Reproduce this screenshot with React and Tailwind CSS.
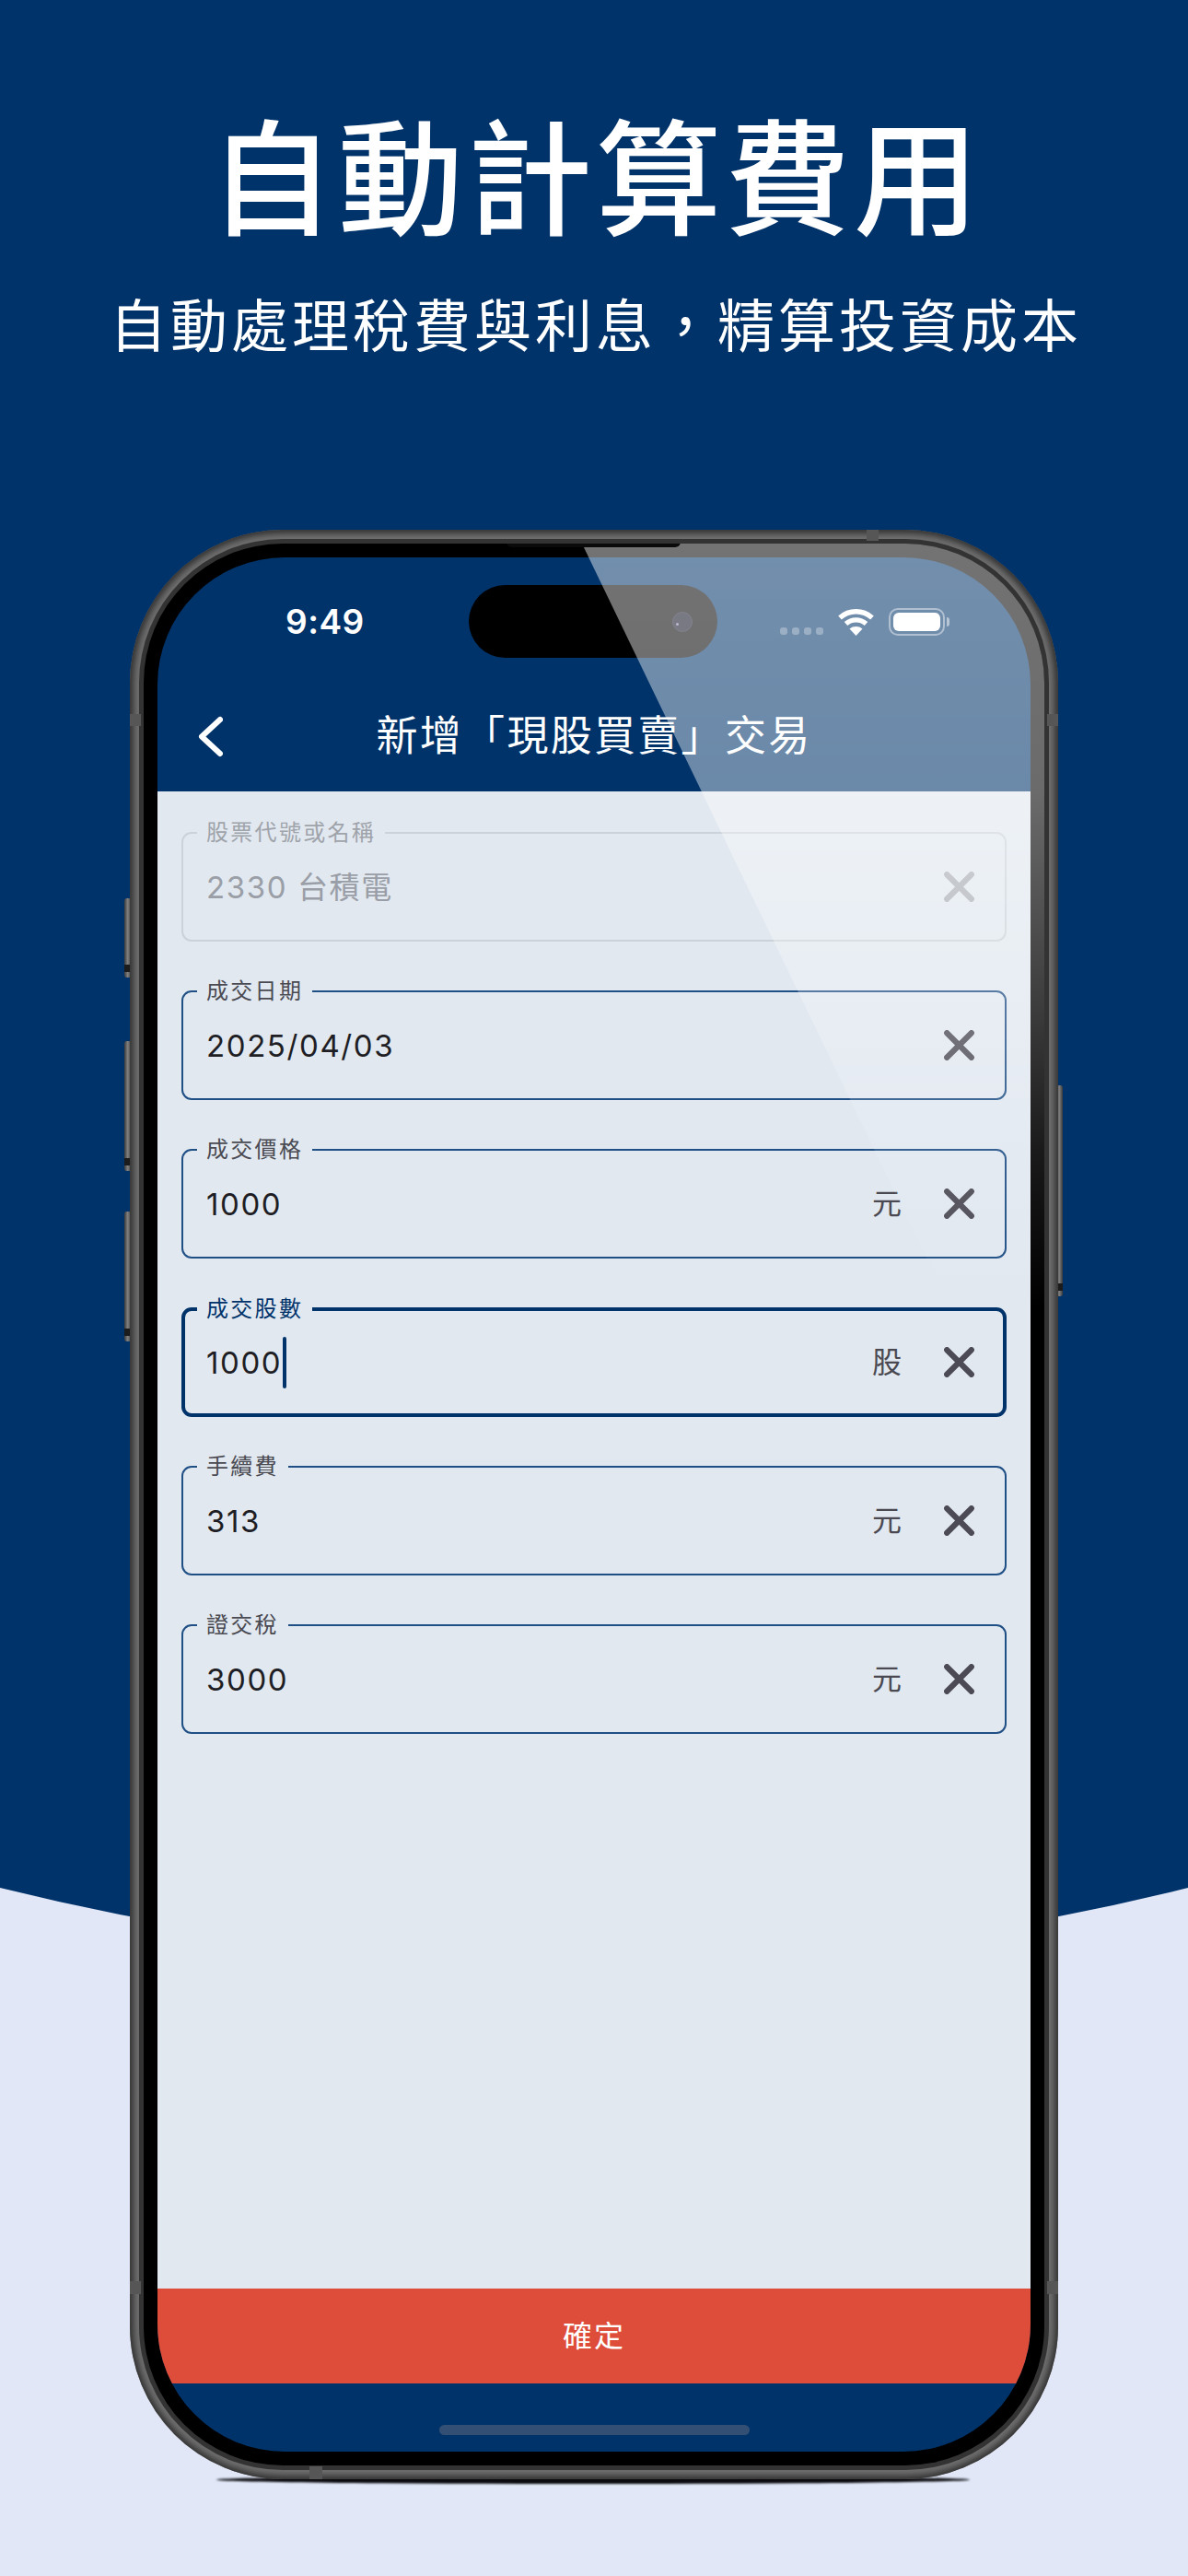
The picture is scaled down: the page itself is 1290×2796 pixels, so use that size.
const FONT = "[font-family:'Inter','Noto_Sans_CJK_TC',sans-serif]";

const fields = [
  { label: "股票代號或名稱", value: "2330 台積電", disabled: true },
  { label: "成交日期", value: "2025/04/03" },
  { label: "成交價格", value: "1000", unit: "元" },
  { label: "成交股數", value: "1000", unit: "股", focused: true },
  { label: "手續費", value: "313", unit: "元" },
  { label: "證交稅", value: "3000", unit: "元" },
];

function CloseIcon({ className }) {
  return (
    <svg viewBox="0 0 33 33" className={`w-[33px] h-[33px] shrink-0 ${className}`} fill="none" stroke="currentColor" strokeWidth="6.2" strokeLinecap="round">
      <path d="M3.2 3.2L29.8 29.8M29.8 3.2L3.2 29.8" />
    </svg>
  );
}

function Field({ label, value, unit, disabled, focused }) {
  const box = focused
    ? "border-4 border-[#00336a] pl-[23px] pr-[31px]"
    : disabled
      ? "border-2 border-[#cbd2da] pl-[25px] pr-[33px]"
      : "border-2 border-[#1f4f85] pl-[25px] pr-[33px]";
  const labelPos = focused ? "left-[13px] -top-[18px]" : "left-[15px] -top-[17px]";
  const labelColor = focused ? "text-[#00336a]" : disabled ? "text-[#9fa3aa]" : "text-[#4a4a52]";
  const valueColor = disabled ? "text-[#9a9ea6]" : "text-[#1e1e24]";
  return (
    <div className={`relative h-[119px] rounded-[11px] flex items-center ${box}`}>
      <span className={`absolute ${labelPos} ${labelColor} bg-[#e1e8f0] px-[10px] h-[32px] leading-[32px] text-[24px] tracking-[2.3px] whitespace-nowrap`}>
        {label}
      </span>
      <div className={`flex-1 flex items-center pt-[1px] text-[33px] leading-[40px] tracking-[1.6px] ${valueColor}`}>
        <span>{value}</span>
        {focused && <span className="ml-[1px] w-[4px] h-[56px] rounded-full bg-[#00336a]" />}
      </div>
      {unit && <span className="w-[32px] text-[32px] leading-[40px] text-[#4a4850]">{unit}</span>}
      <CloseIcon className={`ml-[46px] ${disabled ? "text-[#a9adb4]" : "text-[#4c4a54]"}`} />
    </div>
  );
}

function Wifi() {
  return (
    <svg viewBox="0 0 41 30" className="w-[41px] h-[30px]" fill="none" stroke="#fff" strokeWidth="5.4">
      <path d="M3 10.5C13 1.5 28 1.5 38 10.5" />
      <path d="M9.5 17C16 11.5 25 11.5 31.5 17" />
      <path d="M20.5 30L13.5 22.5C17.5 19.2 23.5 19.2 27.5 22.5Z" fill="#fff" stroke="none" />
    </svg>
  );
}

function Battery() {
  return (
    <div className="flex items-center gap-[2px]">
      <div className="w-[61px] h-[30px] rounded-[10px] border-[2px] border-white/45 p-[3px]">
        <div className="w-full h-full rounded-[6px] bg-white" />
      </div>
      <div className="w-[3px] h-[10px] rounded-r-[3px] bg-white/50" />
    </div>
  );
}

function Band({ className }) {
  return <div className={`absolute bg-[#565656] ${className}`} />;
}

function SideButton({ className }) {
  return (
    <div className={`absolute bg-[linear-gradient(90deg,#3a3a3a,#808080_45%,#3a3a3a)] rounded-[3px] ${className}`}>
      <div className="absolute left-0 right-0 bottom-[6px] h-[8px] bg-[#1c1c1c]" />
    </div>
  );
}

export default function App() {
  return (
    <div className={`relative w-[1290px] h-[2796px] overflow-hidden bg-[#e1e7f7] flex flex-col items-center ${FONT}`}>
      <svg className="absolute left-0 top-0 w-[1290px] h-[2796px]" viewBox="0 0 1290 2796">
        <path d="M0 0H1290V2049Q645 2209 0 2049Z" fill="#00336a" />
      </svg>

      <h1 className="relative mt-[121px] h-[150px] leading-[150px] text-[136px] pl-[4px] tracking-[4px] font-medium text-white">自動計算費用</h1>
      <p className="relative mt-[44px] h-[80px] leading-[80px] text-[62px] pl-[4px] tracking-[4px] font-normal text-white">{"自動處理稅費與利息\uFF0C精算投資成本"}</p>

      <div className="relative mt-[180px] w-[1008px] h-[2116px]">
        <div className="absolute left-[94px] right-[96px] -bottom-[5px] h-[9px] rounded-[50%] bg-[#0c0c10] blur-[1px]" />
        <SideButton className="-left-[6px] top-[400px] w-[8px] h-[86px]" />
        <SideButton className="-left-[6px] top-[555px] w-[8px] h-[141px]" />
        <SideButton className="-left-[6px] top-[740px] w-[8px] h-[141px]" />
        <SideButton className="-right-[5px] top-[603px] w-[7px] h-[229px]" />

        <div className="relative w-full h-full rounded-[166px] bg-[#6e6e6e] shadow-[inset_0_0_6px_4px_#333333] p-[10px]">
          <div className="w-full h-full rounded-[156px] bg-[#333333] p-[5px]">
            <div className="relative w-full h-full rounded-[151px] bg-black p-[15px] overflow-hidden">
              <div className="relative w-full h-full rounded-[138px] overflow-hidden flex flex-col bg-[#00336a]">
                <div className="flex items-center h-[140px] text-white">
                  <span className="ml-[139px] text-[37px] font-semibold tracking-[0.5px]">9:49</span>
                  <div className="ml-auto mr-[88px] flex items-center gap-[15px]">
                    <div className="flex gap-[5px] mt-[19px]">
                      <span className="w-[8px] h-[8px] rounded-[3px] bg-white/30" />
                      <span className="w-[8px] h-[8px] rounded-[3px] bg-white/30" />
                      <span className="w-[8px] h-[8px] rounded-[3px] bg-white/30" />
                      <span className="w-[8px] h-[8px] rounded-[3px] bg-white/30" />
                    </div>
                    <Wifi />
                    <Battery />
                  </div>
                </div>

                <div className="absolute left-[338px] top-[30px] w-[270px] h-[79px] rounded-[40px] bg-black flex items-center justify-end pr-[27px]">
                  <div className="relative w-[22px] h-[22px] rounded-full bg-[#0e1020] border border-[#1e2134]">
                    <div className="absolute left-[3px] top-[11px] w-[3px] h-[3px] rounded-full bg-[#8a80b0]" />
                  </div>
                </div>

                <div className="grid grid-cols-[1fr_auto_1fr] items-center h-[114px] pb-[6px] px-[44px] text-white">
                  <svg viewBox="0 0 27 45" className="w-[27px] h-[45px]" fill="none" stroke="#fff" strokeWidth="6" strokeLinecap="round" strokeLinejoin="round">
                    <path d="M24 4L4 22.5L24 41" />
                  </svg>
                  <span className="text-[45px] leading-[50px] tracking-[2.3px]">新增「現股買賣」交易</span>
                  <span />
                </div>

                <div className="flex-1 bg-[#e1e8f0] px-[26px] pt-[44px] flex flex-col gap-[53px]">
                  {fields.map((f) => (
                    <Field key={f.label} {...f} />
                  ))}
                </div>

                <div className="h-[103px] bg-[#de4d39] flex items-center justify-center text-white text-[32px] tracking-[2px]">確定</div>
                <div className="h-[74px] flex items-start justify-center pt-[45px]">
                  <div className="w-[337px] h-[11px] rounded-full bg-[#334f73]" />
                </div>
              </div>

              <div className="absolute inset-0 bg-[linear-gradient(180deg,rgba(255,255,255,0.45)_0px,rgba(255,255,255,0.42)_270px,rgba(255,255,255,0.23)_510px,rgba(255,255,255,0.1)_660px,rgba(255,255,255,0)_830px)] [clip-path:polygon(476px_0,100%_0,100%_910px,915px_910px)]" />
              <div className="absolute left-[394px] top-[-3px] w-[189px] h-[7px] rounded-b-[6px] bg-[#0a0a0a]" />
            </div>
          </div>
        </div>

        <Band className="left-0 top-[200px] w-[12px] h-[13px]" />
        <Band className="right-0 top-[200px] w-[12px] h-[13px]" />
        <Band className="left-0 top-[1901px] w-[12px] h-[14px]" />
        <Band className="right-0 top-[1901px] w-[12px] h-[14px]" />
        <Band className="left-[800px] top-0 w-[13px] h-[12px]" />
        <Band className="left-[195px] bottom-0 w-[14px] h-[14px]" />
      </div>
    </div>
  );
}
